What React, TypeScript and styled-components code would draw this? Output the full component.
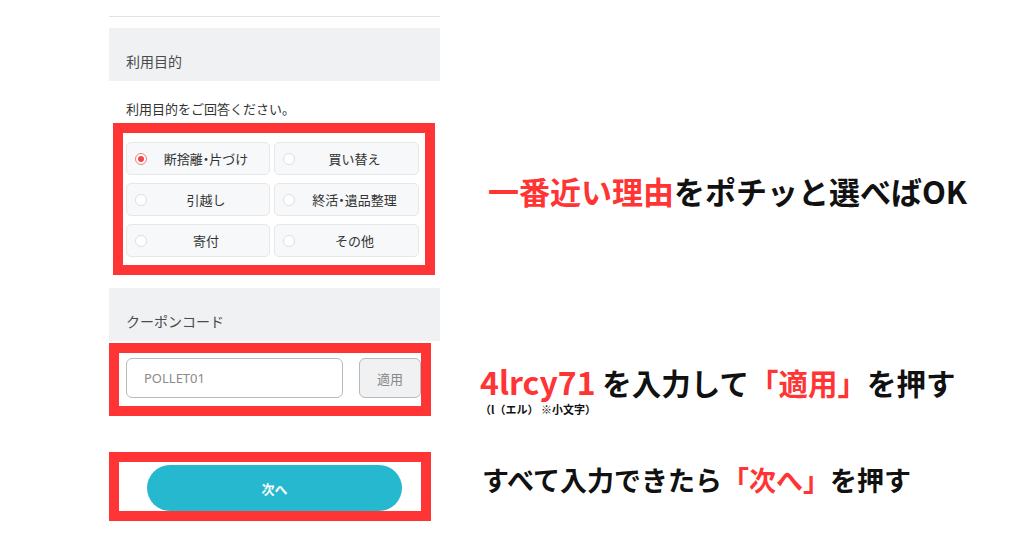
import React from "react";
import styled, { createGlobalStyle } from "styled-components";

// Types
type Option = {
  label: string,
  checked?: boolean
}

const options: Option[] = [
  { label: "断捨離・片づけ", checked: true },
  { label: "買い替え" },
  { label: "引越し" },
  { label: "終活・遺品整理" },
  { label: "寄付" },
  { label: "その他" },
];

// Styles
const GlobalStyle = createGlobalStyle`
  html, body {
    margin: 0;
    padding: 0;
    background: #ffffff;
  }
  body {
    font-family: "Noto Sans CJK JP", "Noto Sans", sans-serif;
    color: #333;
  }
`;

const Root = styled.div`
  display: flex;
  width: 1024px;
  height: 538px;
  overflow: hidden;
`;

const Form = styled.div`
  width: 331px;
  margin-left: 109px;
  padding-top: 16px;
  display: flex;
  flex-direction: column;
`;

const Divider = styled.div`
  height: 1px;
  background: #e2e2e2;
`;

const SectionHeader = styled.div<{ $top: number }>`
  margin-top: ${p => p.$top}px;
  height: 53px;
  background: #f0f1f3;
  display: flex;
  align-items: flex-end;
  padding: 0 0 9px 17px;
  box-sizing: border-box;
  font-size: 14px;
  line-height: 22px;
  color: #4a4a4a;
`;

const Lead = styled.p`
  margin: 19px 0 0 17px;
  font-size: 13px;
  line-height: 18px;
  color: #333;
`;

const Highlight = styled.div<{ $top: number, $left: number }>`
  margin-top: ${p => p.$top}px;
  margin-left: ${p => p.$left}px;
  width: 322px;
  border: 10px solid #ff3434;
  box-sizing: border-box;
  background: #fff;
  overflow: hidden;
`;

const OptionGrid = styled.div`
  display: grid;
  grid-template-columns: 144px 145px;
  grid-auto-rows: 33px;
  column-gap: 4px;
  row-gap: 8px;
  padding: 9px 6px 8px 3px;
`;

const OptionButton = styled.div`
  position: relative;
  display: flex;
  align-items: center;
  justify-content: center;
  padding-left: 16px;
  background: #f7f8f9;
  border: 1px solid #e6e7e9;
  border-radius: 5px;
  font-size: 13px;
  color: #333;
  font-feature-settings: "palt";
`;

const Label = styled.span`
  font-feature-settings: normal;
`;

const Radio = styled.span<{ $checked?: boolean }>`
  position: absolute;
  left: 8px;
  top: 50%;
  width: 12px;
  height: 12px;
  margin-top: -6px;
  border-radius: 50%;
  box-sizing: border-box;
  background: #fff;
  border: 1px solid ${p => (p.$checked ? "#f47b7b" : "#dedfe1")};
  &::after {
    content: "";
    display: ${p => (p.$checked ? "block" : "none")};
    position: absolute;
    left: 2px;
    top: 2px;
    width: 6px;
    height: 6px;
    border-radius: 50%;
    background: #f04646;
  }
`;

const CouponRow = styled.div`
  display: flex;
  align-items: center;
  gap: 16px;
  padding: 5px 0 8px 7px;
`;

const CouponInput = styled.div`
  width: 217px;
  height: 40px;
  box-sizing: border-box;
  border: 1px solid #b9b9b9;
  border-radius: 6px;
  padding-left: 17px;
  display: flex;
  align-items: center;
  font-family: "Noto Sans", sans-serif;
  font-size: 13px;
  color: #8a8a8a;
`;

const ApplyButton = styled.div`
  width: 62px;
  height: 40px;
  box-sizing: border-box;
  background: #f0f1f3;
  border: 1px solid #b9b9b9;
  border-radius: 6px;
  display: flex;
  align-items: center;
  justify-content: center;
  font-size: 13px;
  color: #888;
`;

const NextWrap = styled.div`
  padding: 3px 0 0 28px;
  height: 49px;
  box-sizing: border-box;
`;

const NextButton = styled.div`
  width: 255px;
  height: 46px;
  border-radius: 23px;
  background: #25b8cf;
  color: #fff;
  font-size: 13px;
  font-weight: 700;
  display: flex;
  align-items: center;
  justify-content: center;
`;

const Notes = styled.div`
  display: flex;
  flex-direction: column;
  padding-top: 173px;
  margin-left: 40px;
  font-family: "Noto Sans CJK JP", "Noto Sans", sans-serif;
  font-weight: 700;
  color: #111;
`;

const Note = styled.div<{ $size: number, $top: number, $left: number }>`
  margin-top: ${p => p.$top}px;
  margin-left: ${p => p.$left}px;
  font-size: ${p => p.$size}px;
  line-height: ${p => Math.round(p.$size * 1.12)}px;
  white-space: nowrap;
`;

const Red = styled.span`
  color: #ff3434;
`;

const Code = styled(Red)`
  font-size: 32px;
`;

const SubNote = styled.div`
  margin-top: 4px;
  font-size: 11px;
  line-height: 13px;
  white-space: nowrap;
`;

const App = () => {
  const buttons = options.map(item => {
    const parts = item.label.split("・");
    return (
      <OptionButton key={item.label}>
        <Radio $checked={item.checked} />
        <Label>{parts[0]}</Label>
        {parts.length > 1 && <>・<Label>{parts[1]}</Label></>}
      </OptionButton>
    );
  });
  return (
    <Root>
      <GlobalStyle />
      <Form>
        <Divider />
        <SectionHeader $top={11}>利用目的</SectionHeader>
        <Lead>利用目的をご回答ください。</Lead>
        <Highlight $top={5} $left={4}>
          <OptionGrid>{buttons}</OptionGrid>
        </Highlight>
        <SectionHeader $top={13}>クーポンコード</SectionHeader>
        <Highlight $top={2} $left={0}>
          <CouponRow>
            <CouponInput>POLLET01</CouponInput>
            <ApplyButton>適用</ApplyButton>
          </CouponRow>
        </Highlight>
        <Highlight $top={36} $left={0}>
          <NextWrap>
            <NextButton>次へ</NextButton>
          </NextWrap>
        </Highlight>
      </Form>
      <Notes>
        <Note $size={31} $top={0} $left={8}>
          <Red>一番近い理由</Red>をポチッと選べばOK
        </Note>
        <Note $size={29.5} $top={157} $left={0}>
          <Code>4lrcy71</Code> を入力して<Red>「適用」</Red>を押す
        </Note>
        <SubNote>（l（エル） ※小文字）</SubNote>
        <Note $size={27} $top={49} $left={2}>
          すべて入力できたら<Red>「次へ」</Red>を押す
        </Note>
      </Notes>
    </Root>
  );
}

export default App;
